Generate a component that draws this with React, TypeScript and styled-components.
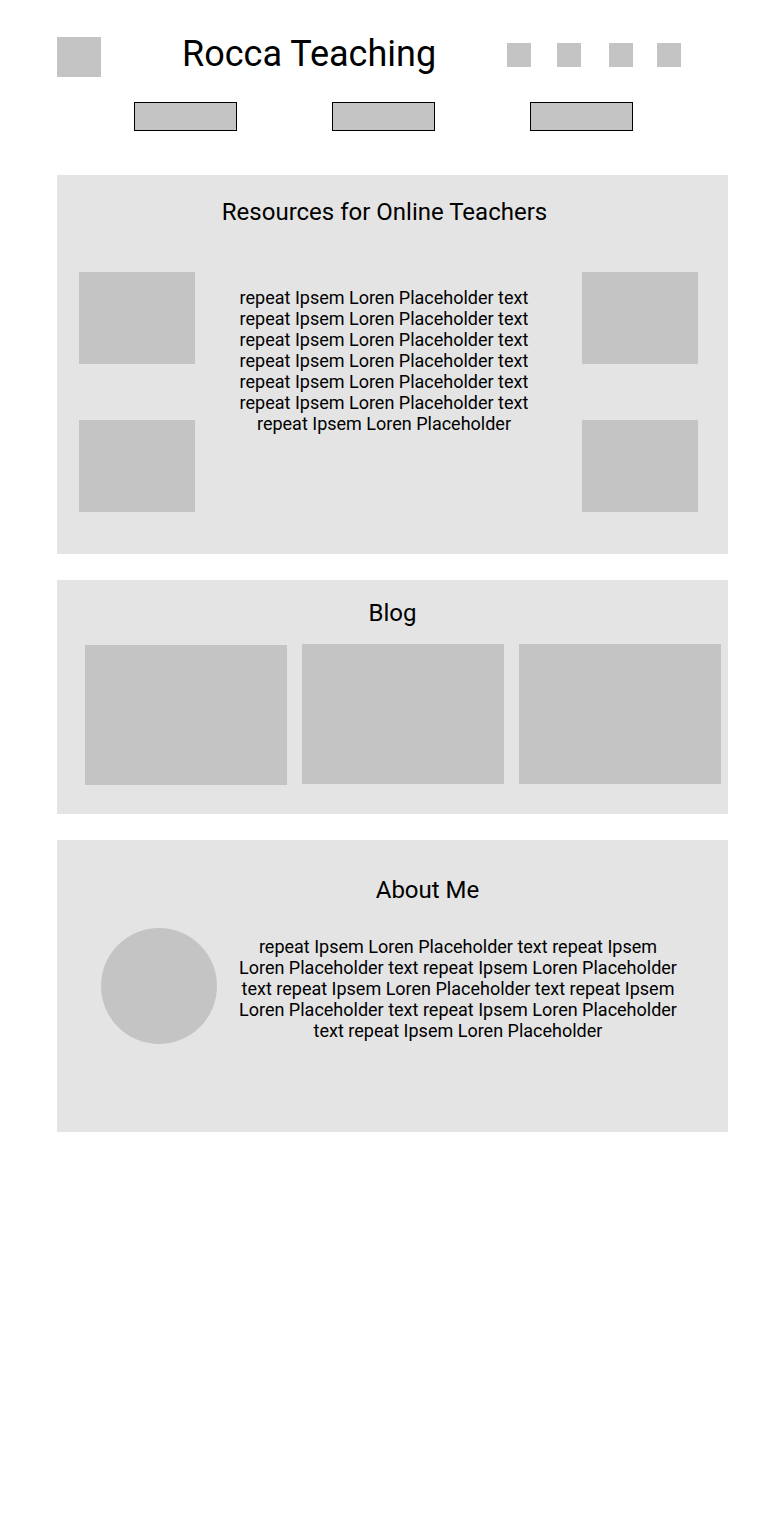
import React from "react";
import styled, { createGlobalStyle } from "styled-components";

const Global = createGlobalStyle`
  html, body { margin: 0; padding: 0; background: #ffffff; }
  body { font-family: Roboto, "Noto Sans", sans-serif; color: #000; }
`;

const Page = styled.div`
  width: 768px;
  min-height: 1525px;
  display: flex;
  flex-direction: column;
`;

const Header = styled.header`
  display: flex;
  align-items: center;
  padding: 37px 0 0 57px;
  height: 40px;
`;

const Logo = styled.div`
  width: 44px;
  height: 40px;
  background: #c4c4c4;
`;

const SiteTitle = styled.h1`
  margin: 0 0 0 81px;
  width: 254px;
  font-size: 36px;
  font-weight: 400;
  line-height: 40px;
  white-space: nowrap;
  position: relative;
  top: -3px;
`;

const Socials = styled.div`
  display: flex;
  margin-left: 71px;
  position: relative;
  top: -2px;
`;

const Social = styled.div<{ $gap?: number }>`
  width: 24px;
  height: 24px;
  background: #c4c4c4;
  margin-left: ${(p) => p.$gap ?? 0}px;
`;

const Nav = styled.nav`
  display: flex;
  justify-content: center;
  gap: 95px;
  margin-top: 25px;
  padding-right: 1px;
`;

const NavButton = styled.div`
  width: 101px;
  height: 27px;
  border: 1px solid #000;
  background: #c4c4c4;
`;

const Section = styled.section<{ $top: number; $height: number }>`
  margin: ${(p) => p.$top}px 40px 0 57px;
  height: ${(p) => p.$height}px;
  background: #e4e4e4;
  box-sizing: border-box;
`;

const SectionTitle = styled.h2<{ $pad: number; $shift?: number }>`
  margin: 0;
  padding-top: ${(p) => p.$pad}px;
  font-size: 24px;
  font-weight: 400;
  line-height: 28px;
  text-align: center;
  position: relative;
  left: ${(p) => p.$shift ?? 0}px;
`;

const ResourceGrid = styled.div`
  display: grid;
  grid-template-columns: 116px 1fr 116px;
  padding: 0 30px 0 22px;
  margin-top: 46px;
`;

const ImageColumn = styled.div`
  display: flex;
  flex-direction: column;
  gap: 56px;
`;

const Thumb = styled.div`
  width: 116px;
  height: 92px;
  background: #c4c4c4;
`;

const Body = styled.p`
  margin: 0;
  font-size: 18px;
  line-height: 21px;
  text-align: center;
`;

const ResourceText = styled(Body)`
  margin-top: 15px;
  padding-right: 9px;
  white-space: nowrap;
`;

const BlogRow = styled.div`
  display: grid;
  grid-template-columns: repeat(3, 202px);
  gap: 15px;
  padding-left: 28px;
  margin-top: 17px;
  align-items: start;
`;

const BlogCard = styled.div<{ $offset?: number }>`
  height: 140px;
  background: #c4c4c4;
  margin-top: ${(p) => p.$offset ?? 0}px;
`;

const AboutRow = styled.div`
  display: flex;
  align-items: flex-start;
  padding-left: 44px;
  margin-top: 22px;
`;

const Avatar = styled.div`
  width: 116px;
  height: 116px;
  border-radius: 50%;
  background: #c4c4c4;
  flex: none;
  margin-top: 2px;
`;

const AboutText = styled(Body)`
  width: 442px;
  margin: 10px 0 0 20px;
`;

const line = "repeat Ipsem Loren Placeholder text";
const aboutCopy =
  Array(6).fill(line).join(" ") + " repeat Ipsem Loren Placeholder";

export default function App() {
  return (
    <Page>
      <Global />
      <Header>
        <Logo />
        <SiteTitle>Rocca Teaching</SiteTitle>
        <Socials>
          <Social />
          <Social $gap={26} />
          <Social $gap={28} />
          <Social $gap={24} />
        </Socials>
      </Header>
      <Nav>
        <NavButton />
        <NavButton />
        <NavButton />
      </Nav>

      <Section $top={44} $height={379}>
        <SectionTitle $pad={23} $shift={-8}>
          Resources for Online Teachers
        </SectionTitle>
        <ResourceGrid>
          <ImageColumn>
            <Thumb />
            <Thumb />
          </ImageColumn>
          <ResourceText>
            {line}
            <br />
            {line}
            <br />
            {line}
            <br />
            {line}
            <br />
            {line}
            <br />
            {line}
            <br />
            repeat Ipsem Loren Placeholder
          </ResourceText>
          <ImageColumn>
            <Thumb />
            <Thumb />
          </ImageColumn>
        </ResourceGrid>
      </Section>

      <Section $top={26} $height={234}>
        <SectionTitle $pad={19}>Blog</SectionTitle>
        <BlogRow>
          <BlogCard $offset={1} />
          <BlogCard />
          <BlogCard />
        </BlogRow>
      </Section>

      <Section $top={26} $height={292}>
        <SectionTitle $pad={36} $shift={35}>
          About Me
        </SectionTitle>
        <AboutRow>
          <Avatar />
          <AboutText>{aboutCopy}</AboutText>
        </AboutRow>
      </Section>
    </Page>
  );
}
